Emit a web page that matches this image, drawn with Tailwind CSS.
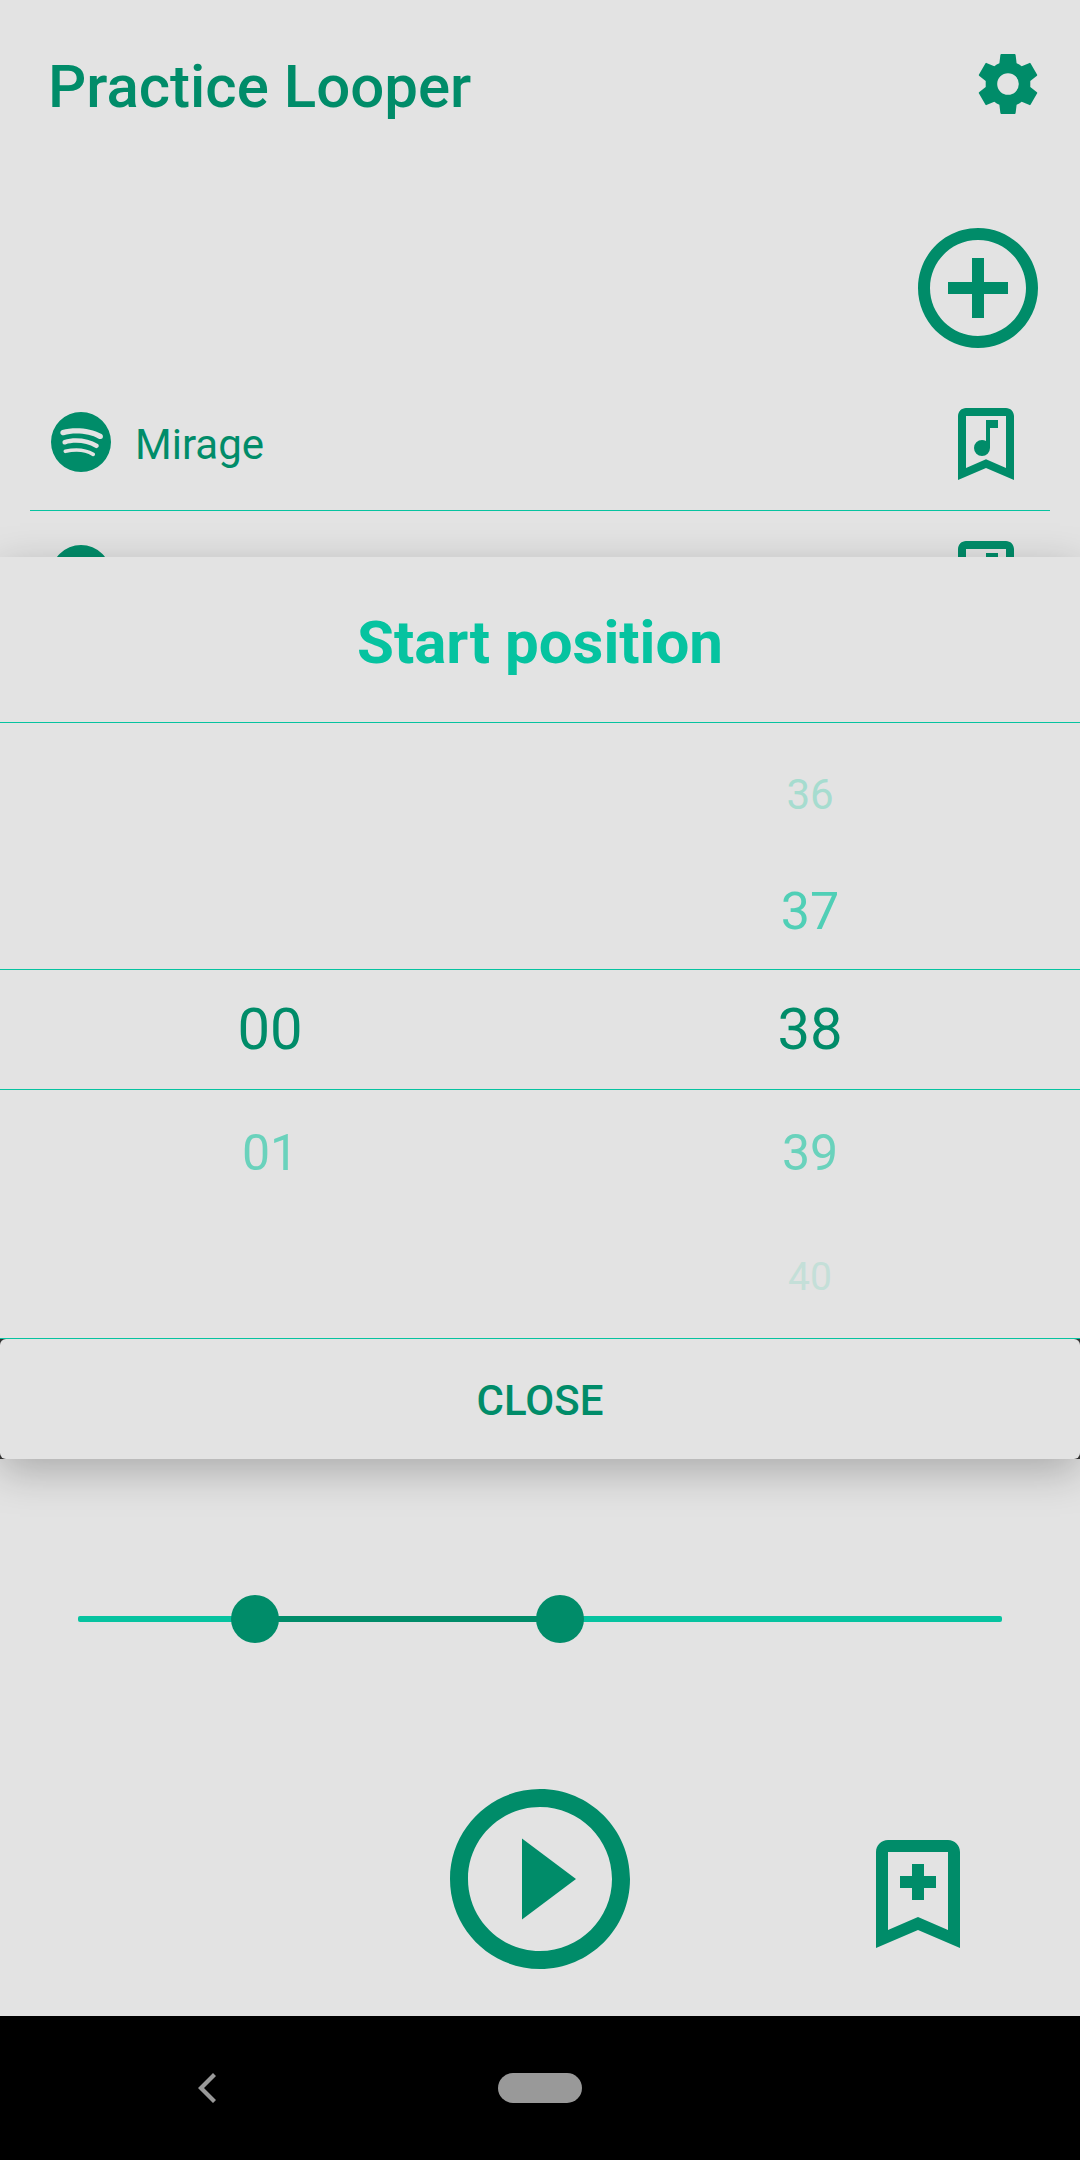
<!DOCTYPE html>
<html lang="en">
<head>
<meta charset="utf-8">
<meta name="viewport" content="width=device-width, initial-scale=1">
<title>Practice Looper</title>
<script src="https://cdn.jsdelivr.net/npm/@tailwindcss/browser@4"></script>
</head>
<body class="flex min-h-screen flex-col bg-[#e3e3e3] font-[Roboto,sans-serif] text-[#008c69]">

<svg class="hidden" aria-hidden="true">
  <symbol id="spotify" viewBox="2 2 20 20"><path fill="currentColor" d="M17.9,10.9C14.7,9 9.35,8.8 6.3,9.75C5.8,9.9 5.3,9.6 5.15,9.15C5,8.65 5.3,8.15 5.75,8C9.3,6.95 15.15,7.15 18.85,9.35C19.3,9.6 19.45,10.2 19.2,10.65C18.95,11 18.35,11.15 17.9,10.9M17.8,13.7C17.55,14.05 17.1,14.2 16.75,13.95C14.05,12.3 9.95,11.8 6.8,12.8C6.4,12.9 5.95,12.7 5.85,12.3C5.75,11.9 5.95,11.45 6.35,11.35C10,10.25 14.5,10.8 17.6,12.7C17.9,12.85 18.05,13.35 17.8,13.7M16.6,16.45C16.4,16.75 16.05,16.85 15.75,16.65C13.4,15.2 10.45,14.9 6.95,15.7C6.6,15.8 6.3,15.55 6.2,15.25C6.1,14.9 6.35,14.6 6.65,14.5C10.45,13.65 13.75,14 16.35,15.6C16.7,15.75 16.75,16.15 16.6,16.45M12,2A10,10 0 0,0 2,12A10,10 0 0,0 12,22A10,10 0 0,0 22,12A10,10 0 0,0 12,2Z"/></symbol>
  <symbol id="bookmark-music" viewBox="5 3 14 18"><path fill="currentColor" fill-rule="evenodd" d="M17 3H7C5.9 3 5 3.9 5 5V21L12 18L19 21V5C19 3.9 18.1 3 17 3ZM17 18L12 15.82L7 18V5H17Z"/><path fill="currentColor" d="M11 11A2 2 0 1 0 13 13V8H15V6H12V11.27C11.7 11.1 11.36 11 11 11Z"/></symbol>
</svg>

<header class="flex items-center justify-between pt-12 pr-9 pl-12">
  <h1 class="pt-1.5 text-[60px] leading-[66px] font-medium">Practice Looper</h1>
  <button type="button" aria-label="Settings" class="size-[72px]">
    <svg class="size-full" viewBox="0 0 24 24"><path fill="currentColor" fill-rule="evenodd" d="M9.8 2H14.2Q14.5 2 14.55 2.4L14.87 5.07Q15.8 5.45 16.56 6.05L19.2 4.98Q19.4 4.9 19.5 5.08L21.72 8.92Q21.8 9.1 21.65 9.25L19.43 11V13L21.65 14.75Q21.8 14.9 21.72 15.08L19.5 18.92Q19.4 19.1 19.2 19.02L16.56 17.95Q15.8 18.55 14.87 18.93L14.55 21.6Q14.5 22 14.2 22H9.8Q9.5 22 9.45 21.6L9.13 18.93Q8.2 18.55 7.44 17.95L4.8 19.02Q4.6 19.1 4.5 18.92L2.28 15.08Q2.2 14.9 2.35 14.75L4.57 13V11L2.35 9.25Q2.2 9.1 2.28 8.92L4.5 5.08Q4.6 4.9 4.8 4.98L7.44 6.05Q8.2 5.45 9.13 5.07L9.45 2.4Q9.5 2 9.8 2ZM12 8.4A3.6 3.6 0 1 0 12 15.6A3.6 3.6 0 1 0 12 8.4Z"/></svg>
  </button>
</header>

<main class="flex flex-col">
  <button type="button" aria-label="Add song" class="mt-27 mr-[42px] size-[120px] self-end">
    <svg class="size-full" viewBox="2 2 20 20"><path fill="currentColor" d="M13 7h-2v4H7v2h4v4h2v-4h4v-2h-4V7zM12 2C6.48 2 2 6.48 2 12s4.48 10 10 10 10-4.48 10-10S17.52 2 12 2zm0 18c-4.41 0-8-3.59-8-8s3.59-8 8-8 8 3.59 8 8-3.59 8-8 8z"/></svg>
  </button>

  <ul class="mx-[30px] mt-[30px] h-[179px] overflow-hidden">
    <li class="flex h-[133px] items-center gap-6 border-b border-[#06c3a0] pr-9 pl-[21px]">
      <svg class="mb-1 size-[60px]"><use href="#spotify"/></svg>
      <span class="flex-1 pt-0.5 text-[42px] leading-[48px]">Mirage</span>
      <button type="button" aria-label="Song bookmarks" class="h-[72px] w-14"><svg class="size-full"><use href="#bookmark-music"/></svg></button>
    </li>
    <li class="flex h-[133px] items-center justify-between border-b border-[#06c3a0] pr-9 pl-[21px]">
      <svg class="mb-1 size-[60px]"><use href="#spotify"/></svg>
      <button type="button" aria-label="Song bookmarks" class="h-[72px] w-14"><svg class="size-full"><use href="#bookmark-music"/></svg></button>
    </li>
  </ul>

  <section role="dialog" aria-labelledby="sheet-title" class="relative z-10 bg-[#e3e3e3] shadow-[0_12px_40px_rgba(0,0,0,0.25)]">
    <h2 id="sheet-title" class="flex h-[166px] items-center justify-center border-b border-[#06c3a0] pt-1.5 text-[60px] leading-[66px] font-bold text-[#06c3a0]">Start position</h2>
    <div class="flex border-b border-[#06c3a0] text-center">
      <ul role="listbox" aria-label="Minutes" class="flex-1">
        <li role="presentation" class="h-[246px]"></li>
        <li role="option" aria-selected="true" class="h-[121px] border-y border-[#06c3a0] text-[58px] leading-[119px]">00</li>
        <li role="option" class="h-[124px] text-[50px] leading-[126px] text-[#6ad2bc]">01</li>
        <li role="presentation" class="h-[124px]"></li>
      </ul>
      <ul role="listbox" aria-label="Seconds" class="flex-1 pt-3">
        <li role="option" class="h-[117px] text-[42px] leading-[120px] text-[#a6dccf]">36</li>
        <li role="option" class="h-[117px] text-[52px] leading-[120px] text-[#50cfb6]">37</li>
        <li role="option" aria-selected="true" class="h-[121px] border-y border-[#06c3a0] text-[58px] leading-[119px]">38</li>
        <li role="option" class="h-[124px] text-[50px] leading-[126px] text-[#6ad2bc]">39</li>
        <li role="option" class="h-[124px] text-[39px] leading-[126px] text-[#c4dfd8]">40</li>
      </ul>
    </div>
    <div class="bg-[#333333]">
      <button type="button" class="block h-[120px] w-full rounded-md bg-[#e3e3e3] pt-1 text-[42px] leading-[48px] font-medium">CLOSE</button>
    </div>
  </section>

  <div class="relative mx-[78px] mt-[136px] flex h-12 items-center">
    <div class="h-1.5 w-full rounded-xs bg-[#06c3a0]">
      <div class="h-full bg-[#008c69]" style="margin-left:19.2%;width:33%"></div>
    </div>
    <input type="range" aria-label="Loop start" min="0" max="1000" value="192" class="pointer-events-none absolute inset-y-0 -left-6 h-12 w-[calc(100%+48px)] appearance-none bg-transparent [&::-webkit-slider-thumb]:pointer-events-auto [&::-webkit-slider-thumb]:size-12 [&::-webkit-slider-thumb]:appearance-none [&::-webkit-slider-thumb]:rounded-full [&::-webkit-slider-thumb]:bg-[#008c69]">
    <input type="range" aria-label="Loop end" min="0" max="1000" value="522" class="pointer-events-none absolute inset-y-0 -left-6 h-12 w-[calc(100%+48px)] appearance-none bg-transparent [&::-webkit-slider-thumb]:pointer-events-auto [&::-webkit-slider-thumb]:size-12 [&::-webkit-slider-thumb]:appearance-none [&::-webkit-slider-thumb]:rounded-full [&::-webkit-slider-thumb]:bg-[#008c69]">
  </div>

  <div class="mt-[146px] mb-[47px] grid grid-cols-3 items-center px-30">
    <button type="button" aria-label="Play" class="col-start-2 size-[180px] justify-self-center">
      <svg class="size-full" viewBox="2 2 20 20"><path fill="currentColor" d="M10 16.5l6-4.5-6-4.5v9zM12 2C6.48 2 2 6.48 2 12s4.48 10 10 10 10-4.48 10-10S17.52 2 12 2zm0 18c-4.41 0-8-3.59-8-8s3.59-8 8-8 8 3.59 8 8-3.59 8-8 8z"/></svg>
    </button>
    <button type="button" aria-label="Add bookmark" class="mt-[30px] h-[108px] w-[84px] justify-self-end">
      <svg class="size-full" viewBox="5 3 14 18"><path fill="currentColor" fill-rule="evenodd" d="M17 3H7C5.9 3 5 3.9 5 5V21L12 18L19 21V5C19 3.9 18.1 3 17 3ZM17 18L12 15.82L7 18V5H17Z"/><path fill="currentColor" d="M11 7H13V9H15V11H13V13H11V11H9V9H11Z"/></svg>
    </button>
  </div>
</main>

<nav aria-label="System" class="mt-auto grid h-36 grid-cols-3 items-center bg-black text-[#999999]">
  <button type="button" aria-label="Back" class="ml-[54px] h-[30px] w-[18px] justify-self-center">
    <svg class="size-full" viewBox="0 0 18 30"><path fill="currentColor" d="M15 0L18 3L6 15L18 27L15 30L0 15Z"/></svg>
  </button>
  <button type="button" aria-label="Home" class="h-[30px] w-[84px] justify-self-center rounded-full bg-[#999999]"></button>
</nav>
</body>
</html>
